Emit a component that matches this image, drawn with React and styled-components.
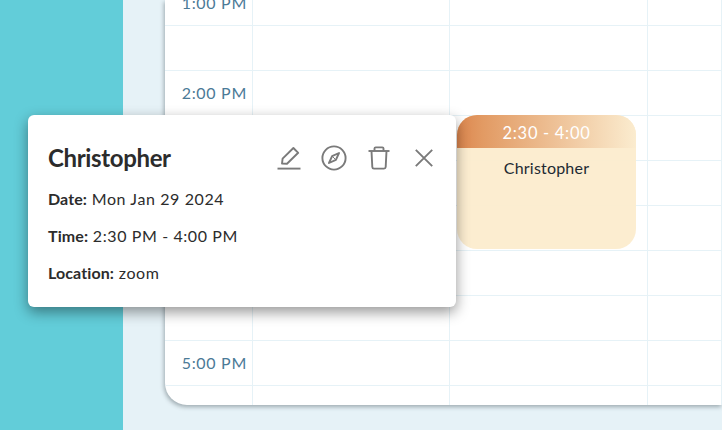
import React from 'react';
import styled, { createGlobalStyle } from 'styled-components';

const GlobalStyle = createGlobalStyle`
  html, body {
    margin: 0;
    padding: 0;
    width: 722px;
    height: 430px;
    overflow: hidden;
    font-family: Lato, "Open Sans", sans-serif;
  }
  * {
    box-sizing: border-box;
  }
`;

const LINE_COLOR = '#e6f2f7';

const Page = styled.div`
  position: relative;
  display: flex;
  width: 722px;
  height: 430px;
  overflow: hidden;
  background: ${LINE_COLOR};
`;

const Sidebar = styled.aside`
  width: 123px;
  flex-shrink: 0;
  background: #62cdd9;
`;

const Main = styled.main`
  flex: 1;
  height: 405px;
  padding-left: 42px;
`;

const CalendarCard = styled.div`
  position: relative;
  height: 100%;
  background: #fff;
  border-bottom-left-radius: 22px;
  box-shadow: -1px 2px 4px rgba(70, 85, 90, 0.45);
`;

const CalendarClip = styled.div`
  height: 100%;
  overflow: hidden;
  border-bottom-left-radius: 22px;
`;

const Grid = styled.div`
  display: grid;
  grid-template-columns: 88px 197px 198px 1fr;
  grid-auto-rows: 45px;
  margin-top: -19px;
`;

const Cell = styled.div`
  border-right: 1px solid ${LINE_COLOR};
  border-bottom: 1px solid ${LINE_COLOR};
`;

const TimeCell = styled(Cell)`
  display: flex;
  align-items: center;
  justify-content: flex-end;
  padding: 0 5px 2px 0;
  font-size: 16px;
  letter-spacing: 0.7px;
  color: #4b7a97;
`;

const EventCard = styled.div`
  position: absolute;
  left: 292px;
  top: 115px;
  width: 179px;
  height: 134px;
  border-radius: 20px;
  overflow: hidden;
  background: rgba(252, 236, 205, 0.94);
  text-align: center;
`;

const EventTime = styled.div`
  height: 33px;
  line-height: 36px;
  font-size: 16.5px;
  letter-spacing: 0.7px;
  color: #fff;
  background: linear-gradient(90deg, #dc864e 0%, #e29a63 14%, #fbeccf 100%);
`;

const EventTitle = styled.div`
  margin-top: 9px;
  font-size: 16px;
  line-height: 22px;
  letter-spacing: 0.2px;
  color: #1d2a33;
`;

const Popover = styled.div`
  position: absolute;
  left: 28px;
  top: 115px;
  width: 428px;
  height: 192px;
  padding: 27px 20px 0;
  background: #fff;
  border-radius: 6px;
  box-shadow: 0 5px 14px rgba(0, 0, 0, 0.42);
  color: #2c2c2c;
`;

const PopoverHeader = styled.div`
  display: flex;
  align-items: center;
  justify-content: space-between;
  height: 32px;
  margin-bottom: 14px;
`;

const PopoverTitle = styled.h2`
  margin: 0;
  font-size: 24px;
  font-weight: 700;
  letter-spacing: -0.35px;
  line-height: 32px;
`;

const IconRow = styled.div`
  display: flex;
  align-items: center;
  gap: 19px;
  margin-right: -1px;
`;

const IconButton = styled.span`
  display: flex;
  width: 26px;
  height: 26px;
  align-items: center;
  justify-content: center;

  & svg {
    display: block;
    stroke: #7a7a7a;
    fill: none;
  }
`;

const InfoRow = styled.p`
  margin: 0 0 15.2px;
  height: 22px;
  font-size: 16px;
  line-height: 22px;
  letter-spacing: 0.6px;

  & b {
    font-weight: 700;
    letter-spacing: 0.1px;
  }
`;

const HOURS = { 0: '1:00 PM', 2: '2:00 PM', 4: '3:00 PM', 6: '4:00 PM', 8: '5:00 PM' };

function PencilIcon() {
  return (
    <svg width="24" height="24" viewBox="0 0 24 24" strokeWidth="1.9">
      <path d="M0.5 22.6 H23.5" />
      <path d="M5 17.6 L5.6 12.6 L16.4 2 L21.2 6.8 L10 17.8 Z" strokeLinejoin="round" />
    </svg>
  );
}

function CompassIcon() {
  return (
    <svg width="26" height="26" viewBox="0 0 26 26" strokeWidth="1.9">
      <circle cx="13" cy="13" r="11.6" />
      <path d="M18 8 L14.9 14.9 L8 18 L11.1 11.1 Z" strokeLinejoin="round" />
      <path d="M11.1 11.1 L14.9 14.9" strokeWidth="1" />
    </svg>
  );
}

function TrashIcon() {
  return (
    <svg width="22" height="24" viewBox="0 0 22 24" strokeWidth="1.9">
      <path d="M0.5 5 H21.5" />
      <path d="M6.5 5 V2.6 Q6.5 1.4 7.7 1.4 H14.3 Q15.5 1.4 15.5 2.6 V5" />
      <path d="M3.5 5 L4.3 21 Q4.4 22.6 6 22.6 H16 Q17.6 22.6 17.7 21 L18.5 5" />
    </svg>
  );
}

function CloseIcon() {
  return (
    <svg width="18" height="18" viewBox="0 0 18 18" strokeWidth="1.9">
      <path d="M0.8 0.8 L17.2 17.2 M17.2 0.8 L0.8 17.2" />
    </svg>
  );
}

function App() {
  const rows = Array.from({ length: 10 }, (_, i) => i);

  return (
    <>
      <GlobalStyle />
      <Page>
        <Sidebar />
        <Main>
          <CalendarCard>
            <CalendarClip>
              <Grid>
                {rows.map((row) => (
                  <React.Fragment key={row}>
                    <TimeCell>{HOURS[row]}</TimeCell>
                    <Cell />
                    <Cell />
                    <Cell />
                  </React.Fragment>
                ))}
              </Grid>
            </CalendarClip>
            <EventCard>
              <EventTime>2:30 - 4:00</EventTime>
              <EventTitle>Christopher</EventTitle>
            </EventCard>
          </CalendarCard>
        </Main>
        <Popover>
          <PopoverHeader>
            <PopoverTitle>Christopher</PopoverTitle>
            <IconRow>
              <IconButton><PencilIcon /></IconButton>
              <IconButton><CompassIcon /></IconButton>
              <IconButton><TrashIcon /></IconButton>
              <IconButton><CloseIcon /></IconButton>
            </IconRow>
          </PopoverHeader>
          <InfoRow><b>Date:</b> Mon Jan 29 2024</InfoRow>
          <InfoRow><b>Time:</b> 2:30 PM - 4:00 PM</InfoRow>
          <InfoRow><b>Location:</b> zoom</InfoRow>
        </Popover>
      </Page>
    </>
  );
}

export default App;
